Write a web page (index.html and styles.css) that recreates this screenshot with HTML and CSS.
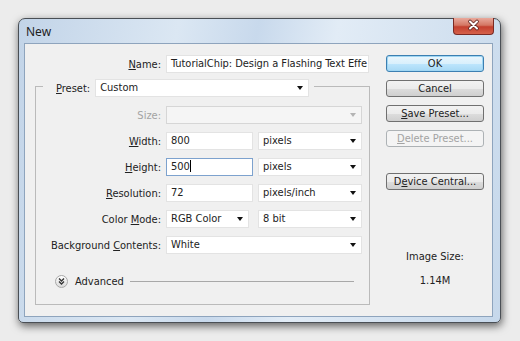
FILE: index.html
```html
<!DOCTYPE html>
<html lang="en">
<head>
  <meta charset="UTF-8" />
  <title>New</title>
  <link rel="stylesheet" href="styles.css">
</head>
<body>
  <div class="window">
    <div class="titlebar">
      <span class="title">New</span>
      <div class="close">
        <svg width="41" height="17" viewBox="0 0 41 17">
          <path d="M17 4.5l7 7M24 4.5l-7 7" stroke="#5a2420" stroke-width="3.6" stroke-linecap="round"/>
          <path d="M17 4.5l7 7M24 4.5l-7 7" stroke="#fff" stroke-width="2" stroke-linecap="round"/>
        </svg>
      </div>
    </div>

    <div class="client">
      <div class="form">
        <div class="name-row">
          <span class="label"><u>N</u>ame:</span>
          <div class="field name-field">TutorialChip: Design a Flashing Text Effe</div>
        </div>

        <fieldset class="group">
          <legend class="preset">
            <div class="preset-inner">
              <span class="label"><u>P</u>reset:</span>
              <div class="field select preset-select"><span>Custom</span><span class="caret"></span></div>
            </div>
          </legend>

          <div class="rows">
            <span class="label disabled">Size:</span>
            <div class="field select disabled-field"><span></span><span class="caret grey"></span></div>

            <span class="label"><u>W</u>idth:</span>
            <div class="pair">
              <div class="field num">800</div>
              <div class="field select unit"><span>pixels</span><span class="caret"></span></div>
            </div>

            <span class="label"><u>H</u>eight:</span>
            <div class="pair">
              <div class="field num focused">500<span class="cursor"></span></div>
              <div class="field select unit"><span>pixels</span><span class="caret"></span></div>
            </div>

            <span class="label"><u>R</u>esolution:</span>
            <div class="pair">
              <div class="field num">72</div>
              <div class="field select unit"><span>pixels/inch</span><span class="caret"></span></div>
            </div>

            <span class="label">Color <u>M</u>ode:</span>
            <div class="pair">
              <div class="field select mode"><span>RGB Color</span><span class="caret"></span></div>
              <div class="field select unit"><span>8 bit</span><span class="caret"></span></div>
            </div>

            <span class="label">Background <u>C</u>ontents:</span>
            <div class="field select"><span>White</span><span class="caret"></span></div>
          </div>

          <div class="advanced">
            <span class="adv-icon">
              <svg width="11" height="11" viewBox="0 0 11 11">
                <path d="M3 2.5l2.5 2.5 2.5-2.5M3 5.5l2.5 2.5 2.5-2.5" fill="none" stroke="#333" stroke-width="1.3"/>
              </svg>
            </span>
            <span class="adv-text">Advanced</span>
            <span class="adv-line"></span>
          </div>
        </fieldset>
      </div>

      <div class="side">
        <div class="btn default">OK</div>
        <div class="btn">Cancel</div>
        <div class="btn"><u>S</u>ave Preset...</div>
        <div class="btn off"><u>D</u>elete Preset...</div>
        <div class="btn device">D<u>e</u>vice Central...</div>
        <div class="image-size">Image Size:</div>
        <div class="image-value">1.14M</div>
      </div>
    </div>
  </div>
</body>
</html>
```

FILE: styles.css
```css
body {
  margin: 0;
  padding: 18px;
  background-color: #ececec;
  font-family: "DejaVu Sans Condensed", "Liberation Sans", sans-serif;
  font-size: 11px;
  color: #222;
}

.window {
  width: 483px;
  height: 305px;
  box-sizing: border-box;
  border: 1px solid #4a4f55;
  border-radius: 7px 7px 5px 5px;
  background: linear-gradient(100deg, #c2d4e8 0%, #dbe7f3 30%, #c8d9ec 45%, #e2ecf6 60%, #c6d8eb 100%);
  box-shadow: 1px 3px 9px rgba(0,0,0,0.6);
  padding: 0 7px 5px 5px;
  display: flex;
  flex-direction: column;
}

.titlebar {
  height: 24px;
  display: flex;
  justify-content: space-between;
  align-items: flex-start;
}

.title {
  font-family: "Noto Sans", sans-serif;
  font-size: 12px;
  line-height: 16px;
  color: #1e1e1e;
  margin: 5px 0 0 2px;
}

.close {
  width: 41px;
  height: 17px;
  margin: -1px -1px 0 0;
  box-sizing: border-box;
  border: 1px solid #7a2a24;
  border-top: none;
  border-radius: 0 0 4px 4px;
  background: linear-gradient(#e9a99c 0%, #d47764 45%, #c4402f 55%, #d5614a 100%);
}

.close svg {
  display: block;
  margin: -1px 0 0 -1px;
}

.client {
  flex: 1;
  display: flex;
  background-color: #f0f0f0;
  border: 1px solid #8ea4bd;
}

.form {
  width: 345px;
}

.label {
  text-align: right;
  white-space: nowrap;
}

.label.disabled {
  color: #a3a3a3;
}

.name-row {
  display: grid;
  grid-template-columns: 136px 203px;
  column-gap: 5px;
  align-items: center;
  margin-top: 11px;
}

.field {
  height: 18px;
  box-sizing: border-box;
  border: 1px solid #e3e3e3;
  background-color: #fff;
  padding: 0 4px;
  line-height: 16px;
  white-space: nowrap;
  overflow: hidden;
}

.name-field {
  padding-right: 0;
  letter-spacing: -0.05px;
}

.select {
  display: flex;
  justify-content: space-between;
  align-items: center;
  padding-right: 5px;
}

.caret {
  width: 0;
  height: 0;
  border-left: 3.5px solid transparent;
  border-right: 3.5px solid transparent;
  border-top: 4px solid #111;
}

.caret.grey {
  border-top-color: #b4b4b4;
}

.disabled-field {
  background-color: #f5f5f5;
  border-color: #d6d6d6;
}

.group {
  margin: 2px 0 0 10px;
  padding: 0 0 16px;
  width: 335px;
  box-sizing: border-box;
  min-width: 0;
  border: 1px solid #bababa;
}

.preset {
  margin-left: 7px;
  padding: 4px 5px 0 13px;
}

.preset-inner {
  display: flex;
  align-items: center;
  gap: 5px;
}

.preset-select {
  width: 214px;
}

.rows {
  display: grid;
  grid-template-columns: 125px 196px;
  column-gap: 5px;
  row-gap: 8px;
  align-items: center;
  margin-top: 9px;
}

.pair {
  display: flex;
  justify-content: space-between;
}

.num {
  width: 87px;
}

.mode {
  width: 83px;
}

.unit {
  width: 104px;
}

.focused {
  border-color: #7da2ce;
}

.cursor {
  display: inline-block;
  width: 1px;
  height: 12px;
  background-color: #000;
  vertical-align: -2px;
}

.advanced {
  display: flex;
  align-items: center;
  height: 14px;
  margin: 20px 15px 0 19px;
}

.adv-icon {
  width: 13px;
  height: 13px;
  box-sizing: border-box;
  border: 1px solid #a8a8a8;
  border-radius: 50%;
  background: linear-gradient(#ffffff, #dadada);
  display: flex;
  align-items: center;
  justify-content: center;
}

.adv-text {
  margin-left: 7px;
}

.adv-line {
  flex: 1;
  height: 1px;
  margin-left: 6px;
  background-color: #a8a8a8;
}

.side {
  width: 98px;
  margin-left: 16px;
  padding-top: 11px;
  display: flex;
  flex-direction: column;
  gap: 8px;
}

.btn {
  height: 17px;
  box-sizing: border-box;
  border: 1px solid #707070;
  border-radius: 3px;
  background: linear-gradient(#f2f2f2 0%, #ebebeb 50%, #dddddd 51%, #cfcfcf 100%);
  text-align: center;
  line-height: 15px;
  white-space: nowrap;
}

.btn.default {
  border-color: #3c7fb1;
  background: linear-gradient(#eaf6fd 0%, #d9f0fc 50%, #bee6fd 51%, #a7d9f5 100%);
  box-shadow: inset 0 0 0 1px #9fd6f3;
}

.btn.off {
  border-color: #adb2b5;
  background: #f4f4f4;
  color: #a3a3a3;
}

.btn.device {
  margin-top: 18px;
}

.image-size {
  margin-top: 52px;
  text-align: center;
  line-height: 13px;
}

.image-value {
  margin-top: 3px;
  text-align: center;
  line-height: 13px;
}
```
